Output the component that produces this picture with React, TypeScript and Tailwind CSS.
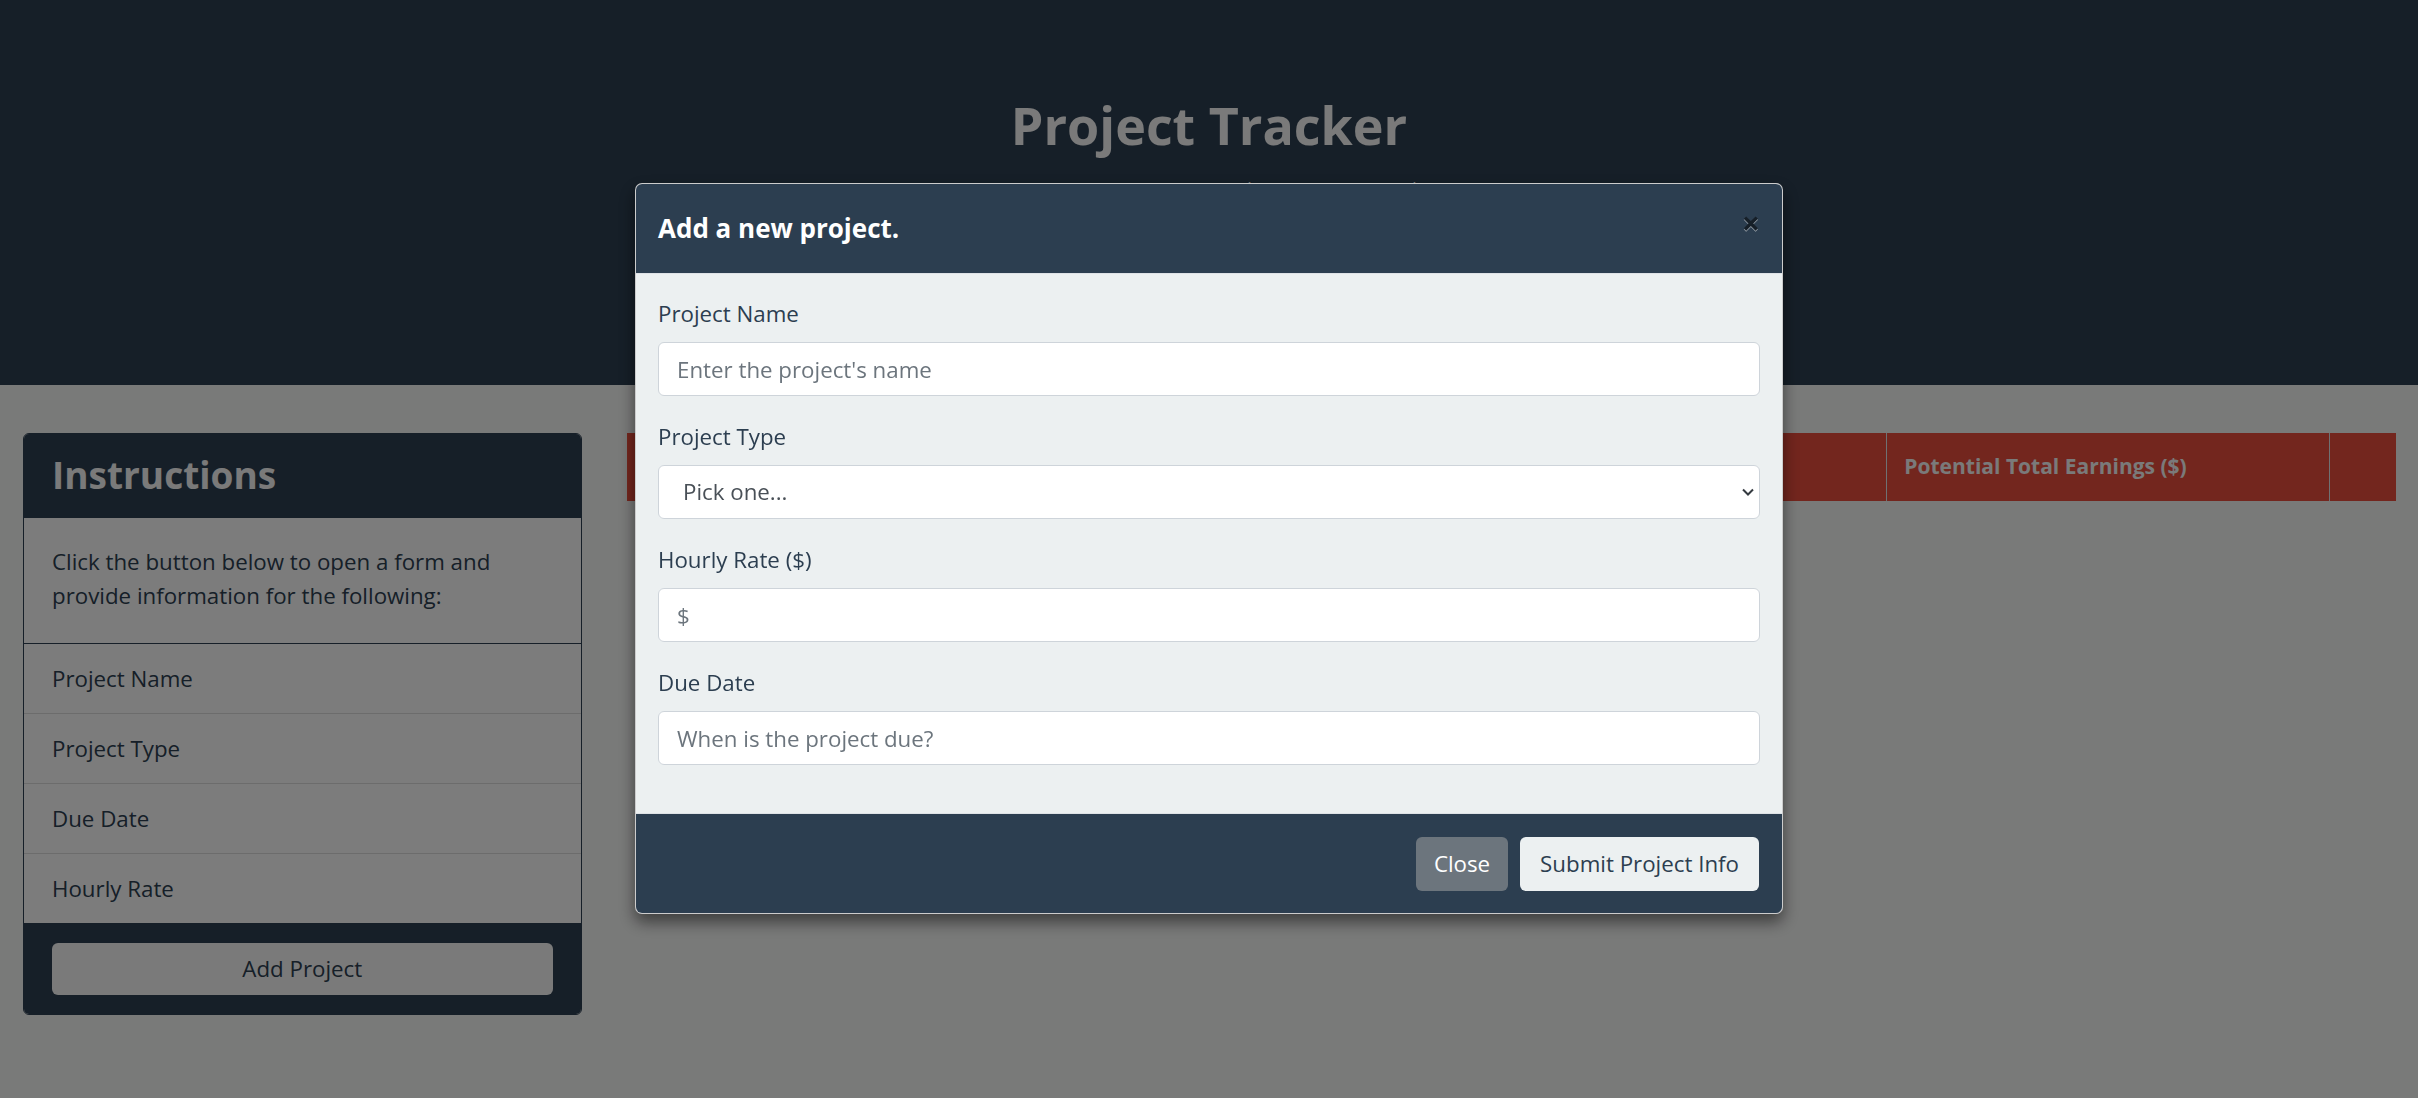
import React from 'react';

const fields = ['Project Name', 'Project Type', 'Due Date', 'Hourly Rate'];

const columns = [
  { label: 'Project Name', width: 'w-[252px]' },
  { label: 'Project Type', width: 'w-[252px]' },
  { label: 'Hourly Rate ($)', width: 'w-[252px]' },
  { label: 'Due Date', width: 'w-[252px]' },
  { label: 'Days Left', width: 'w-[252px]' },
  { label: 'Potential Total Earnings ($)', width: 'w-[443px]' },
  { label: '', width: 'w-[66px]' },
];

const InstructionsCard: React.FC = () => (
  <div className="rounded-[6px] border border-[#2c3e50] overflow-hidden bg-[#f9f9f9]">
    <div className="h-[84px] bg-[#2c3e50] flex items-center px-[28px] pb-[4px]">
      <h2 className="text-[37px] font-bold text-[#f4f4f4] leading-none">Instructions</h2>
    </div>
    <p className="px-[28px] pt-[27px] pb-[30px] text-[22.3px] leading-[34px] text-[#2c3e50] border-b border-[#2c3e50]">
      Click the button below to open a form and provide information for the following:
    </p>
    <ul>
      {fields.map((f) => (
        <li
          key={f}
          className="px-[28px] py-[18px] text-[22.3px] leading-[33px] text-[#2c3e50] border-b border-black/[0.125] last:border-b-0"
        >
          {f}
        </li>
      ))}
    </ul>
    <div className="bg-[#2c3e50] px-[28px] pt-[20px] pb-[19px]">
      <button className="w-full h-[52px] rounded-[6px] bg-[#f4f4f4] text-[#2c3e50] text-[22.3px]">
        Add Project
      </button>
    </div>
  </div>
);

const ProjectTable: React.FC = () => (
  <table className="table-fixed w-full border-collapse">
    <thead>
      <tr className="bg-[#e74c3c] h-[68px]">
        {columns.map((c, i) => (
          <th
            key={i}
            className={`${c.width} px-[17px] text-left align-middle text-[21px] font-bold text-[#f4f4f4] ${
              i > 0 ? 'border-l border-[#dee2e6]' : ''
            }`}
          >
            {c.label}
          </th>
        ))}
      </tr>
    </thead>
    <tbody />
  </table>
);

const Field: React.FC<{ label: string; children: React.ReactNode }> = ({ label, children }) => (
  <div className="mb-[24px]">
    <label className="block text-[22.3px] leading-[33px] text-[#2c3e50] mb-[12px]">{label}</label>
    {children}
  </div>
);

const inputClass =
  'w-full h-[54px] rounded-[6px] border border-[#ced4da] bg-white px-[18px] text-[22.3px] text-[#495057] placeholder:text-[#6c757d] outline-none';

const AddProjectModal: React.FC = () => (
  <div className="fixed inset-0 flex justify-center pt-[183px]">
    <div className="w-[1148px] h-fit rounded-[7px] border border-black/20 bg-white overflow-hidden shadow-[0_8px_16px_rgba(0,0,0,0.5)]">
      <div className="h-[90px] bg-[#2c3e50] border-b border-[#dee2e6] flex items-center justify-between pl-[22px] pr-[22px]">
        <h5 className="text-[26px] font-bold text-white leading-none -mt-[2px]">Add a new project.</h5>
        <button className="-mt-[12px] text-[32px] font-bold leading-none text-black opacity-50 [text-shadow:0_1px_0_#fff]">
          ×
        </button>
      </div>
      <div className="bg-[#ecf0f1] px-[22px] pt-[23px] pb-[24px]">
        <Field label="Project Name">
          <input className={inputClass} placeholder="Enter the project's name" />
        </Field>
        <Field label="Project Type">
          <div className="relative">
            <select className={`${inputClass} appearance-none pl-[24px]`} defaultValue="">
              <option value="">Pick one...</option>
              <option>Landscaping</option>
              <option>Web Design</option>
              <option>Consulting</option>
            </select>
            <svg
              className="absolute right-[6px] top-1/2 -translate-y-1/2 pointer-events-none"
              width="12"
              height="8"
              viewBox="0 0 12 8"
            >
              <path d="M1 1.5l5 5 5-5" fill="none" stroke="#343a40" strokeWidth="2" />
            </svg>
          </div>
        </Field>
        <Field label="Hourly Rate ($)">
          <input className={inputClass} placeholder="$" />
        </Field>
        <Field label="Due Date">
          <input className={inputClass} placeholder="When is the project due?" />
        </Field>
      </div>
      <div className="h-[100px] bg-[#2c3e50] border-t border-[#dee2e6] flex items-center justify-end gap-[12px] pr-[23px]">
        <button className="h-[54px] px-[18px] rounded-[6px] bg-[#6c757d] text-white text-[22.3px]">Close</button>
        <button className="h-[54px] px-[20px] rounded-[6px] bg-[#ecf0f1] text-[#2c3e50] text-[22.3px]">
          Submit Project Info
        </button>
      </div>
    </div>
  </div>
);

export default function App() {
  return (
    <div className="relative min-h-screen bg-[#f3f4f3] font-['Open_Sans',sans-serif]">
      <header className="h-[385px] bg-[#2c3e50] flex flex-col items-center pt-[94px]">
        <h1 className="text-[52px] leading-[62px] font-bold text-[#f4f4f4]">Project Tracker</h1>
        <p className="mt-[15px] text-[28px] leading-[42px] font-light text-[#f4f4f4]">
          Manage your projects and earnings with ease
        </p>
      </header>

      <main className="grid grid-cols-4 pt-[48px]">
        <div className="px-[23px]">
          <InstructionsCard />
        </div>
        <div className="col-span-3 px-[22px]">
          <ProjectTable />
        </div>
      </main>

      {/* modal backdrop */}
      <div className="fixed inset-0 bg-black/50" />
      <AddProjectModal />
    </div>
  );
}
